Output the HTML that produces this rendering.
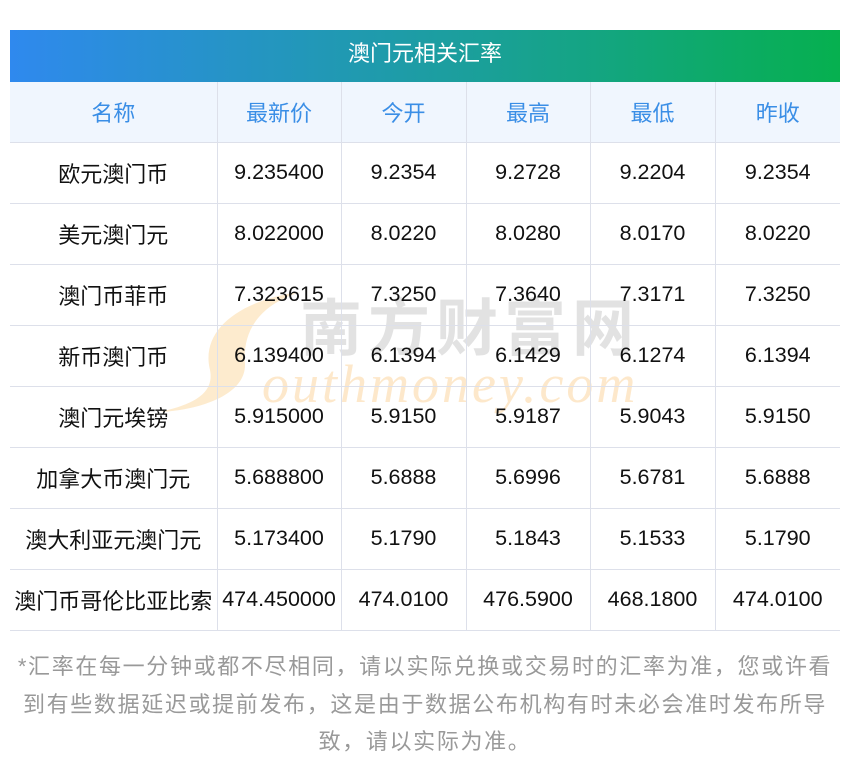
<!DOCTYPE html>
<html><head><meta charset="utf-8"><style>
*{margin:0;padding:0;box-sizing:border-box}
body{width:850px;height:769px;background:#fff;font-family:"Liberation Sans","Noto Sans CJK SC",sans-serif;position:relative;overflow:hidden}
.title{position:absolute;left:10px;top:30px;width:830px;height:52px;background:linear-gradient(90deg,#2f89ee,#1b9f9c 55%,#06b04f);color:#fff;font-size:22px;text-align:center;line-height:48px}
table{position:absolute;left:10px;top:82px;width:830px;border-collapse:collapse;table-layout:fixed}
td,th{border:1px solid #dde0ea;height:61px;text-align:center;font-size:21.5px;color:#111;font-weight:normal;padding:0}
td:first-child{font-size:22px}
th{background:#f0f6fe;color:#3a8ee6;height:60px;font-size:22px}
tr td:first-child,tr th:first-child{border-left:none}
tr td:last-child,tr th:last-child{border-right:none}
tr:first-child th{border-top:none}
.note{position:absolute;left:8px;top:648px;width:834px;text-align:center;font-size:22px;letter-spacing:1.65px;line-height:37.5px;color:#999;white-space:nowrap}
.wm{position:absolute;pointer-events:none}
</style></head><body>
<div class="title">澳门元相关汇率</div>
<svg class="wm" style="left:0;top:0" width="850" height="769">
<path d="M300 292 C240 300 200 330 210 370 C215 395 190 405 160 412 C200 410 245 395 245 365 C242 330 260 305 300 292Z" fill="#fde7c6" opacity="0.85"/>
<text x="300" y="350" font-size="62" fill="#dcdcdc" opacity="0.8" font-family="Noto Sans CJK SC" font-weight="bold" letter-spacing="6">南方财富网</text>
<text x="262" y="402" font-size="54" fill="#fde5c3" opacity="0.85" font-family="Liberation Serif" font-style="italic" letter-spacing="3">outhmoney.com</text>
</svg>
<table>
<colgroup><col style="width:207px"><col style="width:124px"><col style="width:125px"><col style="width:124px"><col style="width:125px"><col style="width:125px"></colgroup>
<tr><th>名称</th><th>最新价</th><th>今开</th><th>最高</th><th>最低</th><th>昨收</th></tr>
<tr><td>欧元澳门币</td><td>9.235400</td><td>9.2354</td><td>9.2728</td><td>9.2204</td><td>9.2354</td></tr>
<tr><td>美元澳门元</td><td>8.022000</td><td>8.0220</td><td>8.0280</td><td>8.0170</td><td>8.0220</td></tr>
<tr><td>澳门币菲币</td><td>7.323615</td><td>7.3250</td><td>7.3640</td><td>7.3171</td><td>7.3250</td></tr>
<tr><td>新币澳门币</td><td>6.139400</td><td>6.1394</td><td>6.1429</td><td>6.1274</td><td>6.1394</td></tr>
<tr><td>澳门元埃镑</td><td>5.915000</td><td>5.9150</td><td>5.9187</td><td>5.9043</td><td>5.9150</td></tr>
<tr><td>加拿大币澳门元</td><td>5.688800</td><td>5.6888</td><td>5.6996</td><td>5.6781</td><td>5.6888</td></tr>
<tr><td>澳大利亚元澳门元</td><td>5.173400</td><td>5.1790</td><td>5.1843</td><td>5.1533</td><td>5.1790</td></tr>
<tr><td style="white-space:nowrap">澳门币哥伦比亚比索</td><td>474.450000</td><td>474.0100</td><td>476.5900</td><td>468.1800</td><td>474.0100</td></tr>
</table>
<div class="note">*汇率在每一分钟或都不尽相同，请以实际兑换或交易时的汇率为准，您或许看<br>到有些数据延迟或提前发布，这是由于数据公布机构有时未必会准时发布所导<br>致，请以实际为准。</div>
</body></html>
